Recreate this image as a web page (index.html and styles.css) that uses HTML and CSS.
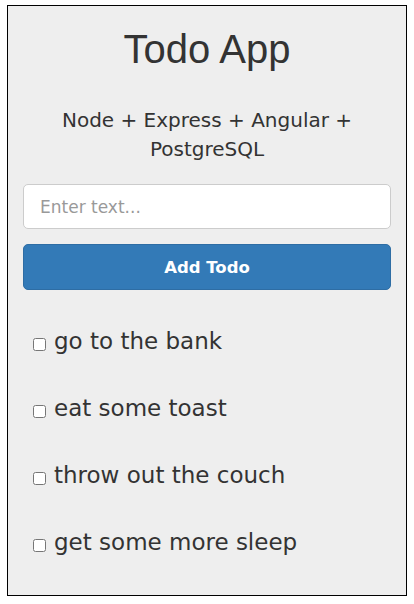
FILE: index.html
```html
<!DOCTYPE html>
<html>
<head>
<meta charset="utf-8">
<link rel="stylesheet" href="styles.css">
</head>
<body>
<div class="app">
  <h1 class="title">Todo App</h1>
  <p class="subtitle">Node + Express + Angular + PostgreSQL</p>
  <form class="form">
    <input class="field" type="text" placeholder="Enter text...">
    <button class="btn" type="button">Add Todo</button>
  </form>
  <ul class="todos">
    <li class="todo"><input class="check" type="checkbox"><span>go to the bank</span></li>
    <li class="todo"><input class="check" type="checkbox"><span>eat some toast</span></li>
    <li class="todo"><input class="check" type="checkbox"><span>throw out the couch</span></li>
    <li class="todo"><input class="check" type="checkbox"><span>get some more sleep</span></li>
  </ul>
</div>
</body>
</html>
```
FILE: styles.css
```css
html, body {
  margin: 0;
  background: #fff;
}
.app {
  margin: 5px 7px 0 7px;
  height: 591px;
  border: 1px solid #000;
  background: #eee;
  box-sizing: border-box;
  width: 400px;
  padding: 0 15px;
  font-family: "DejaVu Sans", sans-serif;
  color: #333;
}
.title {
  margin: 20px 0 0;
  text-align: center;
  font-family: "Liberation Sans", Arial, sans-serif;
  font-weight: 400;
  font-size: 40px;
  line-height: 46px;
}
.subtitle {
  margin: 34px 0 0;
  text-align: center;
  font-size: 20px;
  line-height: 29px;
}
.form {
  margin-top: 20px;
  display: flex;
  flex-direction: column;
  gap: 15px;
}
.field {
  height: 45px;
  box-sizing: border-box;
  border: 1px solid #ccc;
  border-radius: 5px;
  background: #fff;
  padding: 0 16px;
  font-family: "DejaVu Sans", sans-serif;
  font-size: 17px;
  color: #555;
  outline: none;
}
.field::placeholder {
  color: #999;
}
.btn {
  height: 46px;
  border: 1px solid #2e6da4;
  border-radius: 5px;
  background: #337ab7;
  color: #fff;
  font-family: "DejaVu Sans", sans-serif;
  font-weight: 700;
  font-size: 16.5px;
}
.todos {
  list-style: none;
  margin: 36px 0 0;
  padding: 0 0 0 10px;
  display: flex;
  flex-direction: column;
  gap: 37px;
}
.todo {
  display: flex;
  align-items: center;
  font-size: 23px;
  line-height: 30px;
}
.check {
  width: 13px;
  height: 13px;
  margin: 6px 8px 0 0;
}
```
